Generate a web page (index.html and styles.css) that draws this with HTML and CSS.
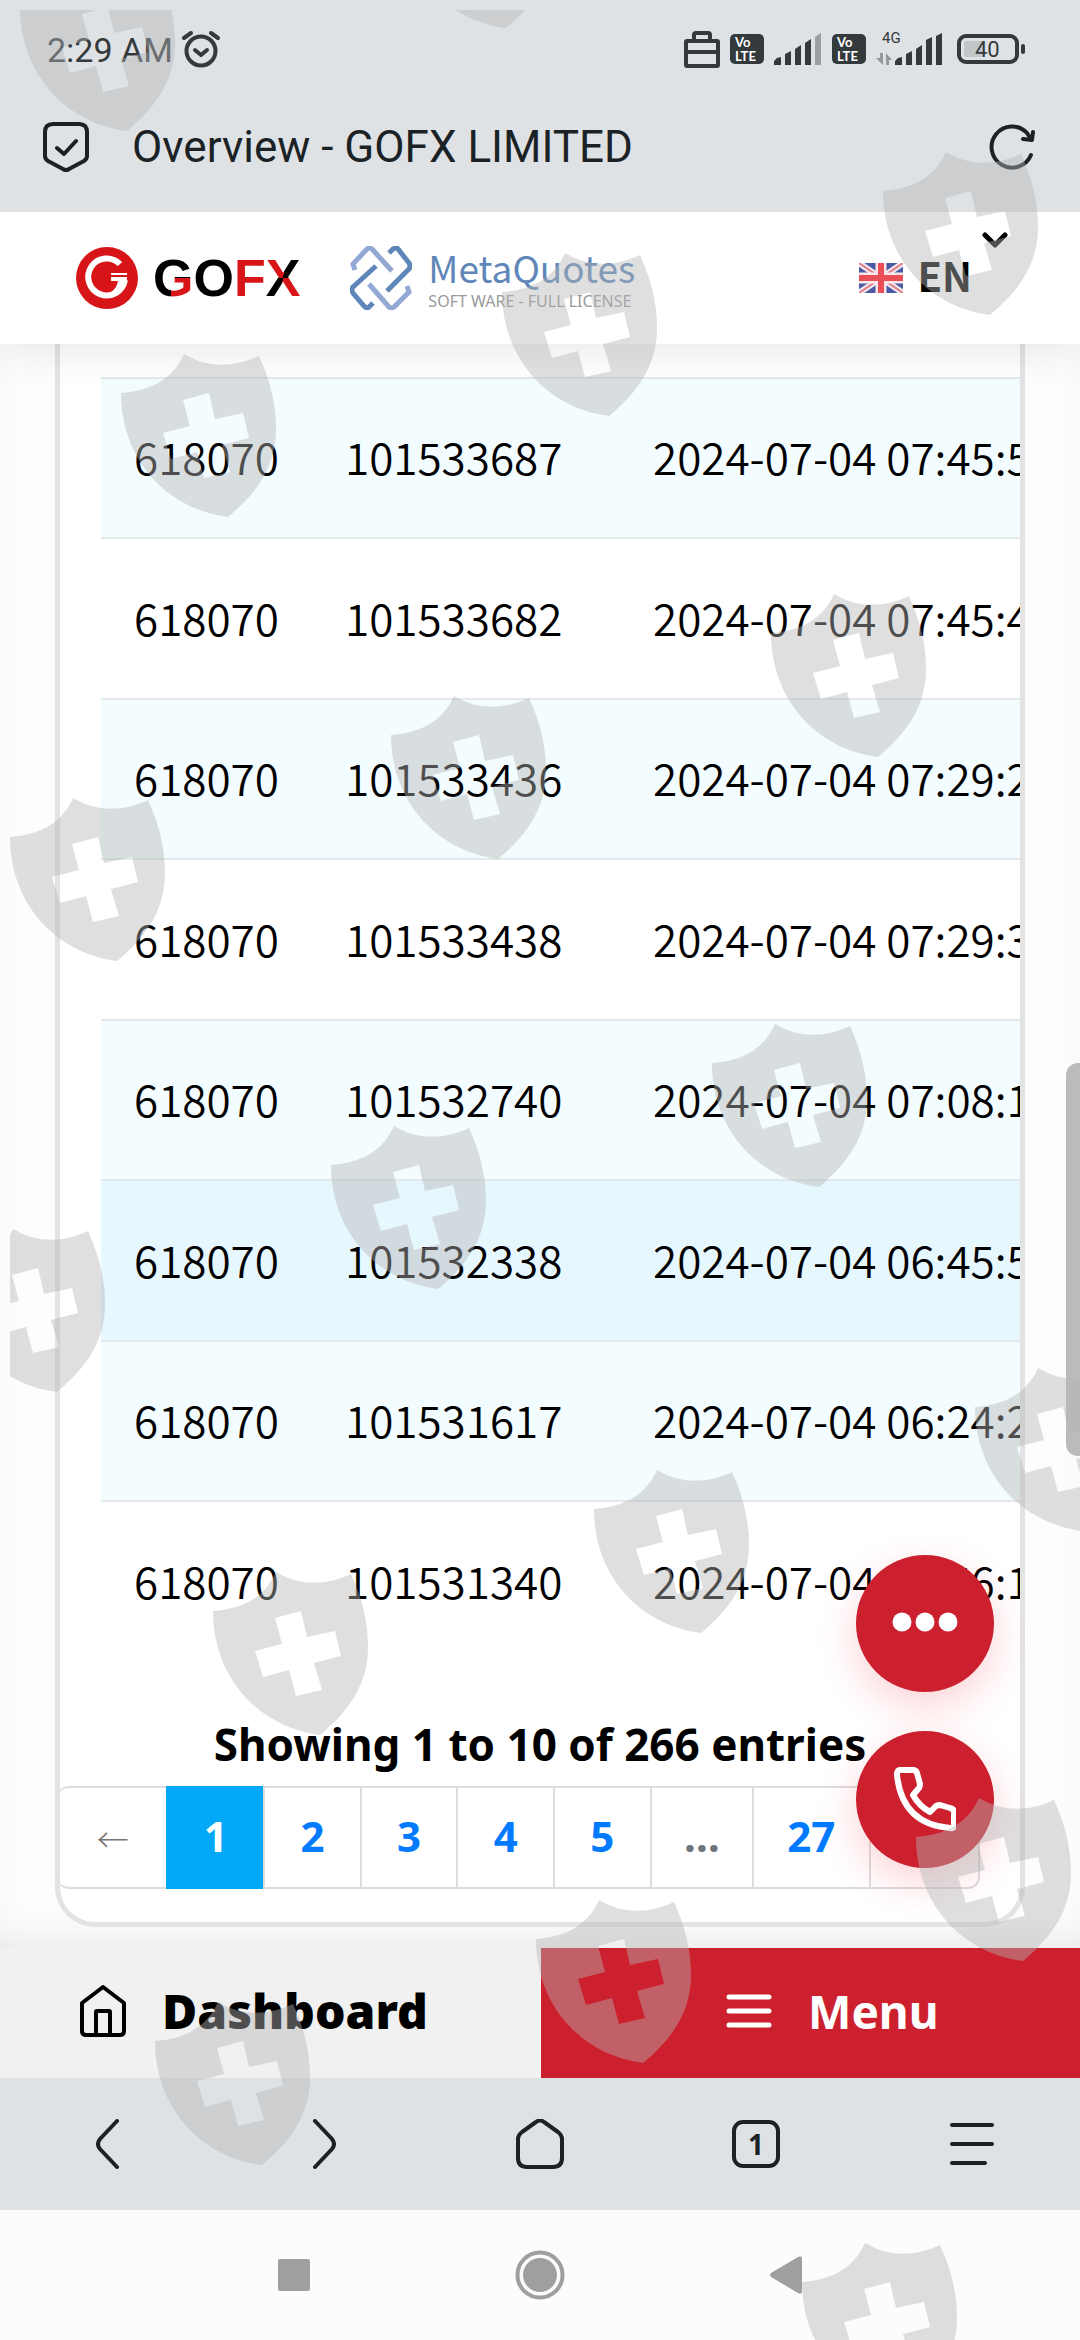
FILE: index.html
```html
<!DOCTYPE html>
<html lang="en">
<head>
<meta charset="utf-8">
<meta name="viewport" content="width=device-width, initial-scale=1">
<title>Overview - GOFX LIMITED</title>
<link rel="stylesheet" href="styles.css">
</head>
<body>
<header class="status">
  <span class="clock">2:29 AM</span>
  <svg class="alarm" width="40" height="38" viewBox="0 0 40 38" fill="none" stroke="#34393c" stroke-width="4" stroke-linecap="round" stroke-linejoin="round"><circle cx="20" cy="21" r="14.500"/><path d="M14 20l6 5 6-5M3 8l7-5M37 8l-7-5"/></svg>
  <div class="status-icons">
    <svg width="36" height="38" viewBox="0 0 36 38" fill="none" stroke="#34393c" stroke-width="4" stroke-linejoin="round"><rect x="2" y="11" width="32" height="25" rx="1"/><path d="M2 22h32M10 11V5q0-2 2-2h12q2 0 2 2v6"/></svg>
    <span class="volte">Vo<br>LTE</span>
    <svg width="48" height="32" viewBox="0 0 48 32" fill="#34393c"><path d="M0 32v-4l3-3 4-1v8zM11 32V21l6-3v14zM21 32V16l6-4v20zM31 32V10l6-4v26z"/><path fill="#9b9fa1" d="M41 32V4l6-4v32z"/></svg>
    <span class="volte">Vo<br>LTE</span>
    <svg width="67" height="44" viewBox="0 -6 67 44" fill="#34393c"><text x="6" y="10" class="net">4G</text><path fill="#95999b" d="M4 20h3v12l-7-7h4zM10 32V20l6 7h-3v5z"/><path d="M19 32v-4l3-3 4-1v8zM30 32V21l6-3v14zM40 32V16l6-4v20zM50 32V7l6-3v28zM60 32V3l6-3v32z"/></svg>
    <svg class="battery" width="68" height="30" viewBox="0 0 68 30"><rect x="2" y="2" width="58" height="26" rx="7" fill="none" stroke="#34393c" stroke-width="4"/><rect x="7" y="7" width="19" height="16" rx="2" fill="#c3c6c9"/><rect x="64" y="10" width="4" height="10" rx="2" fill="#34393c"/><text x="18" y="23" class="pct">40</text></svg>
  </div>
</header>
<div class="address">
  <svg width="46" height="50" viewBox="0 0 46 50" fill="none" stroke="#1b2225" stroke-width="4" stroke-linecap="round" stroke-linejoin="round"><path d="M10 2h26q8 0 8 8v24q0 3-3 5l-15 8q-3 2-6 0l-15-8q-3-2-3-5V10q0-8 8-8zM14 26l7 6 12-13"/></svg>
  <h1 class="title">Overview - GOFX LIMITED</h1>
  <button class="plain" aria-label="Reload"><svg width="46" height="46" viewBox="0 0 46 46" fill="none" stroke="#1b2225" stroke-width="4" stroke-linecap="round" stroke-linejoin="round"><path d="M42 31A20.500 20.500 0 1 1 38 9l4 6M44 8l-1 8-9-1"/></svg></button>
</div>
<main class="site">
  <div class="site-head">
    <a href="#" class="gofx" aria-label="GOFX">
      <svg width="62" height="62" viewBox="0 0 62 62"><circle cx="31" cy="31" r="31" fill="#d71418"/><path d="M44 17A18.500 18.500 0 1 0 49 33" fill="none" stroke="#fff" stroke-width="6"/><path d="M35 26h16v2H35zM35 30h16c0 9-4 16-12 19l-4-4q6-4 7-11h-7z" fill="#fff"/></svg>
      <span class="gofx-word"><span class="g">G</span>O<span class="f">F</span><span class="x">X</span></span>
    </a>
    <a href="#" class="meta">
      <svg width="62" height="64" viewBox="0 0 62 64" fill="none" stroke-width="4"><path stroke="#94a8d4" stroke-width="5" d="M5 24l-2-6L17 3q2-2 5 0l20 22M57 40l2 6-15 15q-3 2-5 0L19 38"/><path stroke="#5f86b8" stroke-width="5" d="M39 7l4-4q3-2 5 0l11 14q2 3 0 6L37 45M23 57l-4 4q-2 2-5-1L3 47q-2-4 0-6L26 20"/></svg>
      <span class="meta-text"><span class="meta-name">MetaQuotes</span><span class="meta-sub">SOFT WARE - FULL LICENSE</span></span>
    </a>
    <button class="lang">
      <svg width="44" height="30" viewBox="0 0 44 30"><path fill="#4a5aa5" d="M0 0h44v30H0z"/><path stroke="#f4e9ee" stroke-width="6" d="M0 0l44 30M44 0L0 30"/><path stroke="#e0808a" stroke-width="2" d="M0 0l44 30M44 0L0 30"/><path stroke="#fbe6ea" stroke-width="11" d="M22 0v30M0 15h44"/><path stroke="#ea4f58" stroke-width="6" d="M22 0v30M0 15h44"/></svg>
      <span>EN</span>
      <svg class="caret" width="26" height="16" viewBox="0 0 26 16" fill="none" stroke="#000" stroke-width="5" stroke-linecap="round" stroke-linejoin="round"><path d="M3 3l10 10L23 3"/></svg>
    </button>
  </div>
  <section class="card">
    <div class="table-wrap">
      <table>
        <tbody>
          <tr><td>618070</td><td>101533687</td><td>2024-07-04 07:45:5</td></tr>
          <tr><td>618070</td><td>101533682</td><td>2024-07-04 07:45:4</td></tr>
          <tr><td>618070</td><td>101533436</td><td>2024-07-04 07:29:2</td></tr>
          <tr><td>618070</td><td>101533438</td><td>2024-07-04 07:29:3</td></tr>
          <tr><td>618070</td><td>101532740</td><td>2024-07-04 07:08:1</td></tr>
          <tr class="active"><td>618070</td><td>101532338</td><td>2024-07-04 06:45:5</td></tr>
          <tr><td>618070</td><td>101531617</td><td>2024-07-04 06:24:2</td></tr>
          <tr><td>618070</td><td>101531340</td><td>2024-07-04 05:56:1</td></tr>
        </tbody>
      </table>
    </div>
    <p class="info">Showing 1 to 10 of 266 entries</p>
    <nav class="pages" aria-label="Pages">
      <a href="#" class="edge">←</a><a href="#" class="current">1</a><a href="#">2</a><a href="#">3</a><a href="#">4</a><a href="#">5</a><span class="dots">…</span><a href="#" class="last">27</a><a href="#" class="edge" aria-label="Next"></a>
    </nav>
  </section>
  <div class="fabs">
    <button class="fab" aria-label="Chat"><svg width="66" height="24" viewBox="0 0 66 24" fill="#fff"><circle cx="10" cy="10" r="9.500"/><circle cx="33" cy="10" r="9.500"/><circle cx="56" cy="10" r="9.500"/></svg></button>
    <button class="fab" aria-label="Call"><svg width="62" height="66" viewBox="0 0 62 66" fill="none" stroke="#fff" stroke-width="6" stroke-linejoin="round"><path d="M6 3h13q3 0 4 3l3 11q0 2-1 4l-6 7q6 11 17 17l6-6q2-1 4-1l10 3q4 1 4 4v13q0 4-4 3Q8 57 3 8q0-5 3-5z"/></svg></button>
  </div>
  <span class="scrollbar"></span>
</main>
<nav class="tabs">
  <a href="#" class="tab">
    <svg width="46" height="52" viewBox="0 0 46 52" fill="none" stroke="#000" stroke-width="4" stroke-linejoin="round"><path d="M2 18L23 2l21 16v28q0 4-4 4H6q-4 0-4-4zM16 50V27q0-1 1-1h12q1 0 1 1v23"/></svg>
    <span class="dash">Dashboard</span>
  </a>
  <button class="tab menu">
    <svg width="46" height="34" viewBox="0 0 46 34" stroke="#fff" stroke-width="5" stroke-linecap="round"><path d="M3 3h40M3 17h40M3 31h40"/></svg>
    <span>Menu</span>
  </button>
</nav>
<nav class="browser" aria-label="Browser">
  <button class="plain" aria-label="Back"><svg width="24" height="50" viewBox="0 0 24 50" fill="none" stroke="#1b2225" stroke-width="4" stroke-linecap="round"><path d="M21 2L4 20q-4 5 0 10l17 18"/></svg></button>
  <button class="plain" aria-label="Forward"><svg width="24" height="50" viewBox="0 0 24 50" fill="none" stroke="#1b2225" stroke-width="4" stroke-linecap="round"><path d="M3 2l17 18q4 5 0 10L3 48"/></svg></button>
  <button class="plain" aria-label="Home"><svg width="48" height="50" viewBox="0 0 48 50" fill="none" stroke="#1b2225" stroke-width="4" stroke-linejoin="round"><path d="M20 3q4-3 8 0l14 10q4 3 4 7v19q0 9-9 9H11q-9 0-9-9V20q0-4 4-7z"/></svg></button>
  <button class="plain"><span class="count">1</span></button>
  <button class="plain" aria-label="More"><svg width="46" height="44" viewBox="0 0 46 44" stroke="#1b2225" stroke-width="4" stroke-linecap="round"><path d="M3 3h40M3 22h40M3 41h33"/></svg></button>
</nav>
<nav class="system" aria-label="System">
  <svg width="32" height="32" viewBox="0 0 32 32"><rect width="32" height="32" rx="2" fill="#9f9f9f"/></svg>
  <svg width="52" height="50" viewBox="0 0 52 50" fill="#9f9f9f"><circle cx="26" cy="25" r="22.500" fill="none" stroke="#9f9f9f" stroke-width="4"/><circle cx="26" cy="25" r="17"/></svg>
  <svg width="32" height="38" viewBox="0 0 32 38" fill="#9f9f9f"><path d="M1 17L28 1q4-2 4 2v32q0 4-4 2L1 21q-2-2 0-4z"/></svg>
</nav>
<svg class="shields" width="100%" height="100%" aria-hidden="true">
  <defs><path id="shield" fill-rule="evenodd" d="M0 39C30 37 52 25 63 0C88 15 114 13 138 2C150 28 155 52 155 75C155 112 136 139 107 163C45 155 0 105 0 39zM62 46L88 39L94 65L122 59L128 84L101 91L109 118L83 124L76 98L50 105L42 79L69 72z"/></defs>
  <g fill="#b4b4b4" fill-opacity=".43" transform="translate(-10 -10)">
    <use href="#shield" x="20" y="-32"/><use href="#shield" x="399" y="-135"/><use href="#shield" x="883" y="152"/>
    <use href="#shield" x="502" y="253"/><use href="#shield" x="121" y="354"/><use href="#shield" x="771" y="594"/>
    <use href="#shield" x="391" y="696"/><use href="#shield" x="10" y="798"/><use href="#shield" x="712" y="1024"/>
    <use href="#shield" x="331" y="1126"/><use href="#shield" x="-50" y="1229"/><use href="#shield" x="975" y="1368"/>
    <use href="#shield" x="594" y="1470"/><use href="#shield" x="213" y="1572"/><use href="#shield" x="916" y="1798"/>
    <use href="#shield" x="536" y="1900"/><use href="#shield" x="155" y="2002"/><use href="#shield" x="802" y="2243"/>
  </g>
</svg>
</body>
</html>
```

FILE: styles.css
```css
* { box-sizing: border-box; }
body {
  margin: 0;
  min-height: 100vh;
  display: flex;
  flex-direction: column;
  position: relative;
  overflow-x: hidden;
  font-family: "Noto Sans", "Open Sans", sans-serif;
  color: #000;
  background: #fcfcfc;
}
svg { display: block; flex: none; }
button { border: 0; padding: 0; background: none; font: inherit; color: inherit; }
a { color: inherit; text-decoration: none; }

.status, .address, .browser { background: #dee2e5; }
.status {
  display: flex;
  align-items: center;
  height: 98px;
  padding: 0 55px 0 47px;
  font-family: Roboto, sans-serif;
}
.clock { font-size: 34px; line-height: 40px; color: #34393c; padding-top: 2px; }
.alarm { margin-left: 8px; }
.status-icons { margin-left: auto; display: flex; align-items: center; gap: 10px; }
.volte {
  width: 34px;
  height: 30px;
  padding: 1px 0 0 5px;
  border-radius: 5px;
  background: #34393c;
  color: #fff;
  font: 700 13px/14px Lato, sans-serif;
}
.net { font: 15px Roboto, sans-serif; }
.pct { font: 22px Roboto, sans-serif; fill: #34393c; }
.battery { margin-left: 4px; }

.address {
  display: flex;
  align-items: center;
  height: 114px;
  padding: 0 45px 16px 43px;
}
.title {
  margin: 0 auto 0 43px;
  font: 400 44px/52px Roboto, sans-serif;
  color: #1b2225;
}

.site {
  flex: 1;
  position: relative;
  overflow: hidden;
  background: #fdfdfd;
  box-shadow: inset 0 -24px 40px -20px rgba(0, 0, 0, .1);
}
.site-head {
  position: relative;
  display: flex;
  align-items: center;
  height: 132px;
  padding: 0 72px 0 76px;
  background: #fff;
  box-shadow: 0 0 50px rgba(0, 0, 0, .12);
}
.gofx { display: flex; align-items: center; gap: 15px; }
.gofx-word { font: 700 52px/60px "Liberation Sans", sans-serif; }
.g, .f, .x { color: transparent; background-clip: text; -webkit-background-clip: text; }
.g { background-image: conic-gradient(from 90deg at 45% 50%, #d71418 0 90deg, #000 90deg); }
.f { background-image: linear-gradient(#d71418, #d71418); }
.x { background-image: conic-gradient(from -60deg, #d71418 0 70deg, #000 70deg 150deg, #d71418 150deg 250deg, #000 250deg 330deg, #d71418 330deg); }
.meta { display: flex; align-items: center; gap: 16px; margin-left: 50px; }
.meta-text { display: flex; flex-direction: column; gap: 2px; }
.meta-name { font: 400 37px/44px "Noto Sans CJK JP", sans-serif; color: #5f86b8; }
.meta-sub { font: 400 16px/20px "Noto Sans", sans-serif; color: #999; }
.lang {
  display: flex;
  align-items: center;
  gap: 10px;
  margin-left: auto;
  font: 700 40px/56px "Noto Sans CJK JP", sans-serif;
}
.lang > span { padding: 0 0 6px 4px; }
.caret { align-self: flex-start; margin-top: -15px; }

.card {
  margin: 0 55px 21px;
  padding-top: 33px;
  border: 5px solid #e3e3e3;
  border-top: 0;
  border-radius: 0 0 40px 40px;
  background: #fff;
}
.table-wrap { margin-left: 41px; overflow: hidden; }
table { width: 100%; border-collapse: collapse; table-layout: fixed; }
td {
  height: 160px;
  padding: 0 0 4px 33px;
  border-top: 2px solid #e3e8ea;
  font: 350 44px/60px "Noto Sans CJK JP", sans-serif;
  white-space: nowrap;
}
tr:nth-child(even) td { height: 161px; }
td:first-child { width: 211px; }
td:nth-child(2) { width: 308px; }
tr:nth-child(odd) { background: #f3fcff; }
tr.active { background: #e7f7fe; }
.info {
  margin: 0;
  padding: 54px 0 14px;
  font-size: 44px;
  line-height: 56px;
  font-weight: 700;
  text-align: center;
}
.pages {
  display: flex;
  width: 923px;
  height: 103px;
  margin: 0 0 33px -3px;
  border: 2px solid #ddd;
  border-left: 0;
  border-radius: 12px;
  color: #007bff;
  font-size: 42px;
  font-weight: 700;
}
.pages > * {
  flex: 96 1 0;
  display: flex;
  align-items: center;
  justify-content: center;
  padding-bottom: 4px;
  border-left: 2px solid #ddd;
}
.pages .edge { flex-grow: 109; color: #777; font: 300 32px/40px "Noto Sans CJK JP", sans-serif; }
.pages .edge:first-child { border-left-color: transparent; padding-bottom: 0; }
.pages .current { background: #03a9f8; color: #fff; margin: -2px 0; border-color: #03a9f8; }
.pages .dots { flex-grow: 102; color: #6c757d; }
.pages .last { flex-grow: 116; }

.fabs {
  position: absolute;
  right: 86px;
  bottom: 80px;
  display: grid;
  gap: 39px;
}
.fab {
  width: 138px;
  height: 137px;
  border-radius: 50%;
  display: grid;
  place-items: center;
  background: #cd202e;
  box-shadow: 0 14px 40px rgba(240, 30, 50, .2);
}
.scrollbar {
  position: absolute;
  right: 0;
  top: 851px;
  width: 14px;
  height: 393px;
  border-radius: 12px 0 0 12px;
  background: #bbb;
}

.tabs { display: grid; grid-template-columns: 541px 1fr; height: 130px; background: #f1f1f1; }
.tab { display: flex; align-items: center; gap: 36px; padding: 0 0 4px 80px; font-size: 48px; line-height: 60px; font-weight: 700; }
.dash { font-weight: 900; }
.menu { padding-left: 185px; font-size: 46px; background: #cd202e; color: #fff; }

.browser { display: grid; grid-template-columns: repeat(5, 1fr); height: 132px; }
.plain { display: grid; place-items: center; }
.count {
  width: 48px;
  height: 48px;
  border: 4px solid #1b2225;
  border-radius: 11px;
  color: #1b2225;
  font: 700 28px/40px "Noto Sans", sans-serif;
}
.system { display: flex; align-items: center; justify-content: space-between; height: 130px; padding: 0 278px; }

.shields { position: absolute; left: 10px; top: 10px; width: calc(100% - 10px); height: calc(100% - 10px); pointer-events: none; }
```
